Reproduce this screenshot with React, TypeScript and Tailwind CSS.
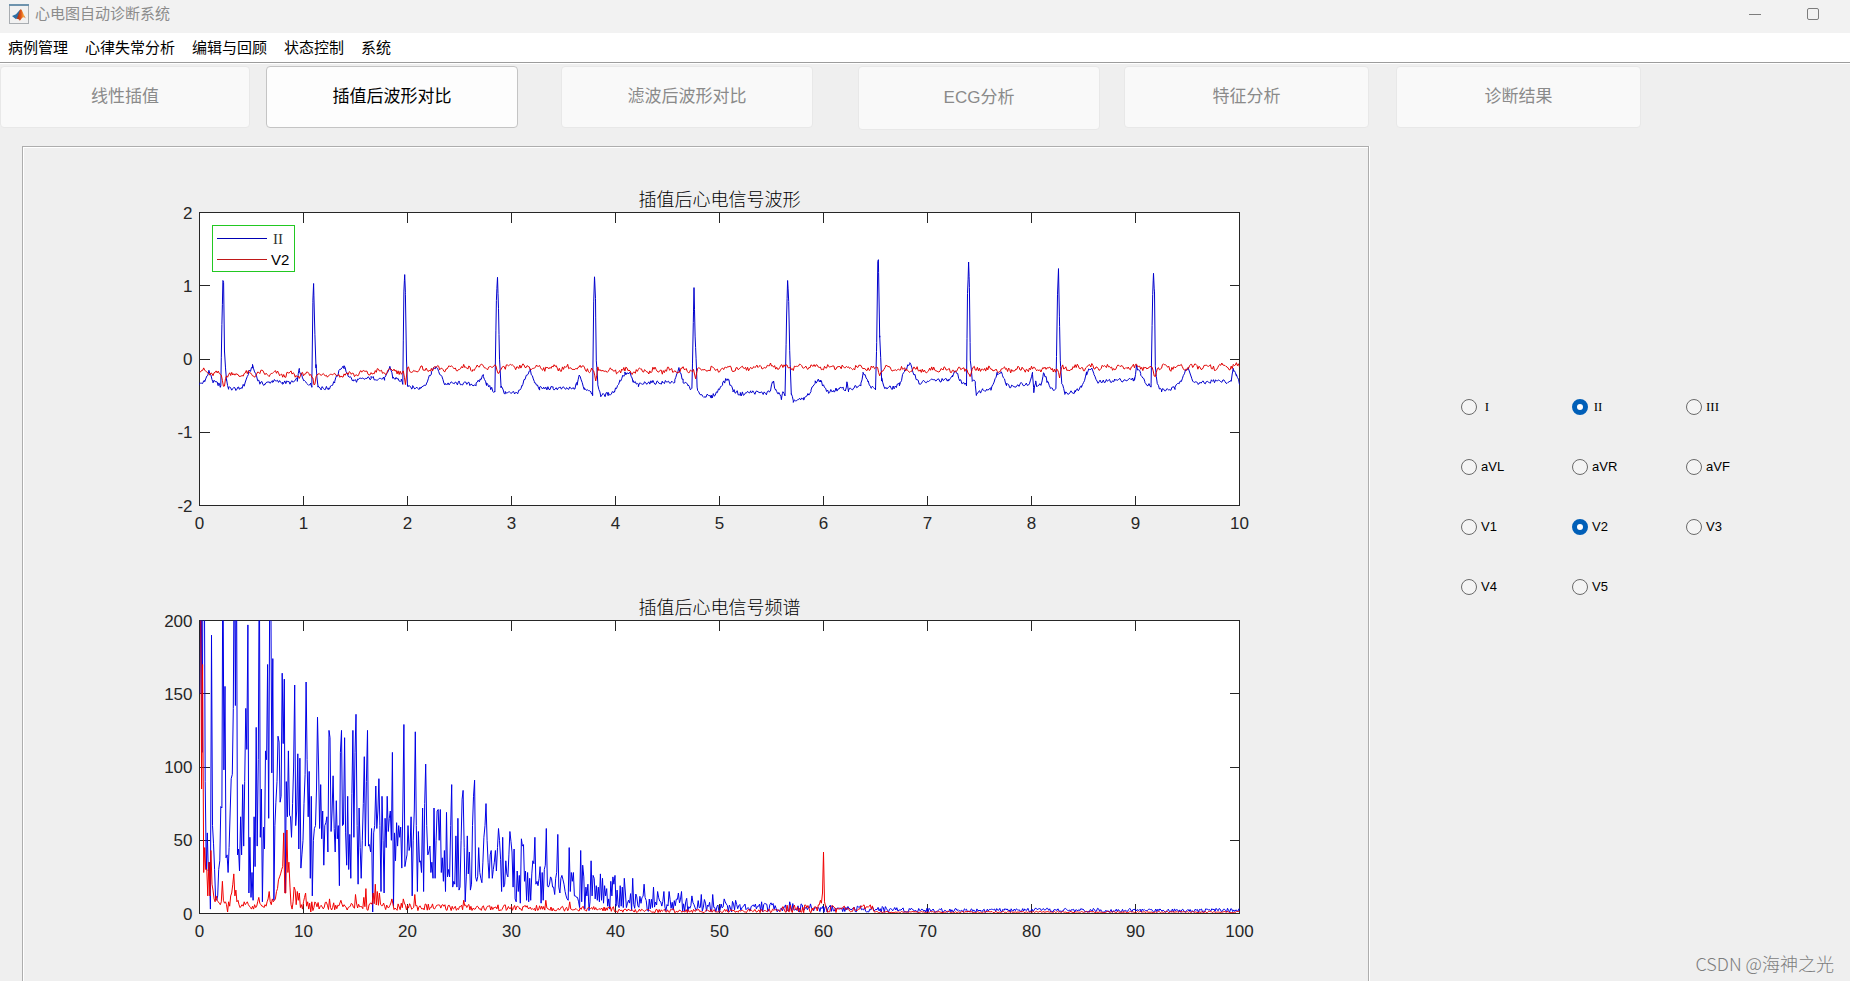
import { useState } from "react";

/* ---------- signal data ---------- */

type Point = [number, number];

// Lead II, keyed by time (s) and amplitude (mV)
const LEAD_II: number[] = [
  0, -0.34, 0.05, -0.31, 0.09, -0.16, 0.13, -0.31, 0.18, -0.34, 0.205, -0.38, 0.215, 0.45, 0.225, 1.08, 0.232, 1.05, 0.24, 0.1, 0.26, -0.3, 0.28, -0.4,
  0.38, -0.41, 0.43, -0.36, 0.47, -0.2, 0.51, -0.1, 0.55, -0.24, 0.58, -0.33, 0.63, -0.34, 0.7, -0.3, 0.8, -0.32, 0.9, -0.32,
  0.94, -0.28, 0.96, -0.15, 1.0, -0.3, 1.07, -0.35, 1.08, -0.36, 1.09, 0.8, 1.097, 1.03, 1.107, 0.5, 1.12, -0.1, 1.14, -0.37,
  1.17, -0.4, 1.24, -0.4, 1.3, -0.31, 1.36, -0.12, 1.39, -0.11, 1.43, -0.22, 1.48, -0.3, 1.55, -0.28, 1.65, -0.26, 1.78, -0.27,
  1.81, -0.2, 1.83, -0.1, 1.86, -0.25, 1.94, -0.3, 1.955, -0.36, 1.965, 0.9, 1.973, 1.17, 1.98, 0.9, 1.99, 0, 2.0, -0.35, 2.05, -0.39,
  2.12, -0.4, 2.18, -0.33, 2.23, -0.18, 2.27, -0.11, 2.31, -0.2, 2.36, -0.34, 2.5, -0.33, 2.66, -0.35, 2.7, -0.28, 2.73, -0.22,
  2.76, -0.34, 2.8, -0.4, 2.84, -0.45, 2.855, 0.8, 2.865, 1.1, 2.875, 0.7, 2.885, 0, 2.9, -0.38, 2.94, -0.47, 3.05, -0.47, 3.1, -0.38,
  3.14, -0.22, 3.18, -0.16, 3.22, -0.32, 3.27, -0.4, 3.4, -0.4, 3.6, -0.41, 3.63, -0.34, 3.65, -0.22, 3.7, -0.4, 3.76, -0.43,
  3.78, -0.48, 3.79, 0.8, 3.798, 1.11, 3.808, 0.8, 3.815, 0, 3.83, -0.35, 3.86, -0.5, 3.93, -0.48, 3.99, -0.44, 4.04, -0.3, 4.09, -0.2,
  4.14, -0.2, 4.17, -0.31, 4.22, -0.36, 4.3, -0.32, 4.45, -0.32, 4.57, -0.31, 4.61, -0.13, 4.65, -0.3, 4.7, -0.37, 4.735, -0.42,
  4.748, 0.5, 4.755, 1.0, 4.765, 0.3, 4.775, 0, 4.785, -0.4, 4.82, -0.49, 4.92, -0.52, 4.98, -0.45, 5.03, -0.33, 5.08, -0.27,
  5.13, -0.43, 5.2, -0.48, 5.3, -0.45, 5.45, -0.47, 5.49, -0.43, 5.515, -0.3, 5.54, -0.43, 5.57, -0.48, 5.595, -0.53, 5.605, -0.45, 5.63, -0.52,
  5.645, 0.6, 5.655, 1.07, 5.665, 0.8, 5.675, 0.1, 5.69, -0.5, 5.71, -0.57, 5.81, -0.55, 5.88, -0.44, 5.92, -0.31, 5.97, -0.29,
  6.03, -0.45, 6.1, -0.43, 6.19, -0.4, 6.21, -0.45, 6.225, -0.32, 6.24, -0.43, 6.3, -0.38, 6.36, -0.34, 6.38, -0.18, 6.43, -0.3,
  6.46, -0.38, 6.5, -0.42, 6.512, 0.2, 6.522, 1.36, 6.528, 1.38, 6.54, 0.3, 6.56, -0.28, 6.59, -0.4, 6.68, -0.39, 6.73, -0.35,
  6.78, -0.15, 6.83, -0.07, 6.87, -0.2, 6.92, -0.33, 7.05, -0.29, 7.2, -0.29, 7.24, -0.25, 7.27, -0.14, 7.31, -0.3, 7.375, -0.35,
  7.385, 0.9, 7.395, 1.33, 7.403, 1.0, 7.412, 0, 7.43, -0.28, 7.46, -0.33, 7.47, -0.48, 7.53, -0.42, 7.61, -0.4, 7.67, -0.2,
  7.72, -0.2, 7.76, -0.35, 7.83, -0.39, 7.9, -0.34, 7.98, -0.36, 8.01, -0.2, 8.022, -0.44, 8.04, -0.3, 8.05, -0.4, 8.1, -0.32,
  8.115, -0.18, 8.15, -0.3, 8.18, -0.38, 8.235, -0.42, 8.25, 0.9, 8.26, 1.22, 8.268, 0.6, 8.277, 0, 8.29, -0.32, 8.32, -0.46,
  8.42, -0.45, 8.48, -0.38, 8.53, -0.2, 8.57, -0.12, 8.6, -0.2, 8.63, -0.32, 8.8, -0.29, 8.99, -0.28, 9.01, -0.1, 9.05, -0.2,
  9.09, -0.32, 9.15, -0.36, 9.165, 0.9, 9.173, 1.15, 9.183, 0.9, 9.19, -0.1, 9.21, -0.35, 9.25, -0.43, 9.38, -0.4, 9.44, -0.28, 9.48, -0.15,
  9.51, -0.14, 9.54, -0.27, 9.6, -0.34, 9.75, -0.3, 9.92, -0.31, 9.94, -0.15, 9.97, -0.22, 10, -0.33,
];

// Lead V2 baseline drift
const LEAD_V2: number[] = [
  0, -0.16, 0.2, -0.22, 0.6, -0.2, 1, -0.22, 1.4, -0.21, 1.8, -0.17, 2.1, -0.15, 2.5, -0.12, 3, -0.11, 3.5, -0.12, 4, -0.16,
  4.4, -0.16, 5, -0.14, 5.5, -0.1, 6, -0.11, 6.5, -0.13, 7, -0.15, 8, -0.14, 8.7, -0.11, 9.2, -0.12, 10, -0.1,
];

// Time of each R peak and the dip that it leaves in V2
const V2_DIPS: Point[] = [
  [0.235, -0.41], [1.105, -0.38], [1.98, -0.35], [2.875, -0.22], [3.81, -0.3], [4.77, -0.27],
  [5.665, -0.12], [6.54, -0.23], [7.41, -0.24], [8.27, -0.26], [9.185, -0.27],
];

// Spectrum of lead II, one value for each 0.1 Hz
const SPECTRUM_II: number[] = [
  150, 250, 110, 250, 260, 90, 30, 55, 29, 35, 3, 190, 60, 48, 30, 10, 9, 12, 30, 36, 73, 72, 260, 98, 155, 38, 40, 28, 45, 70,
  92, 95, 140, 260, 142, 260, 40, 44, 29, 66, 40, 88, 46, 90, 140, 112, 197, 14, 52, 11, 28, 9, 66, 32, 127, 46, 105, 250, 52, 85,
  8, 59, 44, 111, 105, 170, 65, 220, 240, 96, 174, 9, 60, 76, 90, 121, 117, 76, 80, 164, 116, 160, 14, 90, 66, 111, 67, 66, 52, 75,
  100, 156, 60, 70, 109, 44, 106, 31, 40, 50, 75, 95, 158, 105, 66, 97, 24, 80, 12, 50, 58, 60, 85, 134, 100, 58, 88, 51, 70, 33,
  60, 62, 66, 42, 125, 120, 56, 70, 94, 58, 42, 77, 51, 60, 19, 110, 125, 60, 61, 120, 55, 33, 80, 30, 54, 24, 82, 125, 52, 110,
  136, 60, 20, 72, 45, 24, 50, 75, 107, 46, 90, 125, 46, 47, 42, 58, 1, 55, 60, 87, 58, 70, 92, 60, 15, 80, 50, 14, 65, 45,
  80, 56, 65, 70, 50, 110, 5, 55, 36, 62, 46, 60, 52, 59, 31, 70, 129, 32, 36, 40, 60, 43, 46, 66, 12, 50, 70, 124, 60, 15,
  56, 35, 36, 28, 72, 15, 75, 102, 60, 40, 42, 46, 28, 35, 24, 72, 24, 50, 70, 71, 50, 71, 28, 38, 22, 43, 15, 69, 25, 30, 25,
  60, 88, 18, 22, 20, 53, 18, 65, 16, 18, 50, 78, 84, 45, 8, 25, 53, 27, 42, 16, 20, 60, 80, 91, 25, 22, 25, 45, 28, 24,
  21, 35, 52, 60, 75, 50, 35, 24, 40, 43, 24, 30, 35, 43, 29, 45, 58, 50, 37, 15, 52, 18, 20, 36, 27, 25, 40, 56, 49, 42,
  18, 44, 10, 8, 29, 15, 26, 7, 51, 46, 47, 22, 29, 9, 28, 8, 24, 9, 27, 36, 34, 52, 20, 22, 19, 24, 32, 7, 28, 9,
  30, 33, 58, 19, 18, 20, 25, 24, 18, 18, 13, 24, 28, 54, 18, 14, 24, 26, 23, 20, 15, 12, 10, 9, 45, 15, 28, 22, 28, 12,
  12, 11, 11, 8, 4, 43, 8, 33, 25, 3, 18, 12, 20, 2, 8, 36, 12, 26, 24, 10, 19, 9, 18, 8, 27, 9, 24, 7, 19, 12,
  17, 5, 10, 3, 22, 12, 25, 20, 26, 5, 16, 6, 4, 19, 5, 18, 4, 24, 14, 4,
];

// Spectrum of V2, one value for each 0.1 Hz
const SPECTRUM_V2: number[] = [
  260, 250, 85, 170, 28, 45, 30, 30, 12, 35, 12, 43, 20, 16, 10, 8, 12, 9, 8, 7, 6, 8, 22, 9, 7, 8, 6, 1, 8, 5,
  12, 14, 20, 27, 12, 16, 8, 9, 6, 4, 5, 6, 5, 8, 6, 7, 8, 6, 5, 4, 3, 5, 3, 6, 4, 5, 8, 11, 7, 6,
  5, 5, 4, 6, 5, 8, 10, 15, 8, 6, 10, 8, 9, 10, 15, 17, 23, 25, 27, 30, 32, 55, 14, 14, 57, 28, 35, 18, 6, 3,
  8, 18, 16, 6, 15, 9, 14, 4, 6, 3, 8, 11, 14, 5, 8, 3, 7, 1, 8, 2, 4,
];

const V2_PEAKS: Record<number, number> = {
  125: 10, 136: 9, 150: 13, 158: 11, 160: 17, 167: 14, 169: 20, 171: 15, 173: 14, 185: 10, 196: 10, 207: 13,
  254: 9, 333: 9, 356: 8, 597: 9, 598: 7, 599: 14, 600: 42, 601: 8,
};

const II_PEAKS: Record<number, number> = {
  416: 24, 427: 20, 436: 18, 440: 15, 446: 15, 451: 15, 460: 14, 463: 15, 473: 12, 482: 13, 493: 13, 504: 10, 515: 9, 540: 8, 567: 8,
};

// Repeatable value between 0 and 1
function noise(i: number, seed: number): number {
  const s = Math.sin(i * 12.9898 + seed * 78.233) * 43758.5453;
  return s - Math.floor(s);
}

function interpolate(keys: number[], t: number): number {
  let i = 0;
  while (i < keys.length - 4 && keys[i + 2] < t) i += 2;
  const f = (t - keys[i]) / (keys[i + 2] - keys[i]);
  return keys[i + 1] + (keys[i + 3] - keys[i + 1]) * Math.min(Math.max(f, 0), 1);
}

function buildLeadII(): Point[] {
  const times: number[] = [];
  for (let i = 0; i <= 1000; i++) times.push(i / 100);
  for (let i = 0; i < LEAD_II.length; i += 2) times.push(LEAD_II[i]);
  times.sort((a, b) => a - b);
  return times.map((t, i) => [t, interpolate(LEAD_II, t) + (noise(i, 1) - 0.5) * 0.055]);
}

function buildLeadV2(): Point[] {
  const points: Point[] = [];
  for (let i = 0; i <= 1000; i++) {
    const t = i / 100;
    let v = interpolate(LEAD_V2, t) + 0.024 * Math.sin((t * 2 * Math.PI) / 0.14) + (noise(i, 2) - 0.5) * 0.06;
    for (const [at, depth] of V2_DIPS) {
      const d = Math.abs(t - at);
      if (d < 0.02) v = depth + (v - depth) * (d / 0.02);
    }
    points.push([t, v]);
  }
  return points;
}

function buildSpectrumII(): Point[] {
  const points: Point[] = [];
  for (let i = 0; i <= 1000; i++) {
    let v = SPECTRUM_II[i];
    if (v === undefined) {
      const f = i / 10;
      const top = f < 50 ? 14 - (f - 40) * 0.55 : f < 60 ? 8 - (f - 50) * 0.25 : f < 70 ? 5.5 - (f - 60) * 0.25 : 2.8;
      v = II_PEAKS[i] ?? 0.8 + noise(i, 3) * top;
    }
    points.push([i / 10 + 0.05, v]);
  }
  return points;
}

function buildSpectrumV2(): Point[] {
  const points: Point[] = [];
  for (let i = 0; i <= 1000; i++) {
    let v = V2_PEAKS[i] ?? SPECTRUM_V2[i];
    if (v === undefined) {
      const f = i / 10;
      const low = f < 40 ? 2.5 - f * 0.03 : 0.5;
      const top = f < 40 ? 7 - f * 0.09 : f < 56 ? 2.6 : f < 65 ? 5.5 : 1;
      v = low + noise(i, 4) * top;
    }
    points.push([i / 10, v]);
  }
  return points;
}

/* ---------- charts ---------- */

const PLOT_W = 1040;
const PLOT_H = 293;
const TICK = 10;

interface PlotProps {
  id: string;
  title: string;
  left: number;
  top: number;
  xMax: number;
  xStep: number;
  yMin: number;
  yMax: number;
  yStep: number;
  series: { color: string; points: Point[] }[];
}

function range(from: number, to: number, step: number): number[] {
  const out: number[] = [];
  for (let v = from; v <= to; v += step) out.push(v);
  return out;
}

function Plot({ id, title, left, top, xMax, xStep, yMin, yMax, yStep, series }: PlotProps) {
  const sx = (x: number) => left + (x / xMax) * PLOT_W;
  const sy = (y: number) => top + PLOT_H - ((y - yMin) / (yMax - yMin)) * PLOT_H;
  const xs = range(0, xMax, xStep);
  const ys = range(yMin, yMax, yStep);
  return (
    <g>
      <clipPath id={id}>
        <rect x={left} y={top} width={PLOT_W} height={PLOT_H} />
      </clipPath>
      <text
        x={left + PLOT_W / 2}
        y={top - 7}
        textAnchor="middle"
        className="fill-black font-['Noto_Sans_CJK_SC',sans-serif] text-lg font-light"
      >
        {title}
      </text>
      <rect x={left} y={top} width={PLOT_W} height={PLOT_H} fill="#fff" />
      <g stroke="#262626" fill="none" shapeRendering="crispEdges">
        {xs.map((x) => (
          <path key={x} d={`M${sx(x)} ${top}v${TICK}M${sx(x)} ${top + PLOT_H}v${-TICK}`} />
        ))}
        {ys.map((y) => (
          <path key={y} d={`M${left} ${sy(y)}h${TICK}M${left + PLOT_W} ${sy(y)}h${-TICK}`} />
        ))}
        <rect x={left} y={top} width={PLOT_W} height={PLOT_H} />
      </g>
      <g clipPath={`url(#${id})`} fill="none" strokeLinejoin="bevel">
        {series.map((s) => (
          <polyline
            key={s.color}
            stroke={s.color}
            points={s.points.map(([x, y]) => `${sx(x).toFixed(1)},${sy(y).toFixed(1)}`).join(" ")}
          />
        ))}
      </g>
      <g className="fill-[#262626] font-['Liberation_Sans',Arial,sans-serif] text-[17px]">
        {xs.map((x) => (
          <text key={x} x={sx(x)} y={top + PLOT_H + 23} textAnchor="middle">
            {x}
          </text>
        ))}
        {ys.map((y) => (
          <text key={y} x={left - 7} y={sy(y) + 6} textAnchor="end">
            {y}
          </text>
        ))}
      </g>
    </g>
  );
}

const leadII = buildLeadII();
const leadV2 = buildLeadV2();
const spectrumII = buildSpectrumII();
const spectrumV2 = buildSpectrumV2();

function Charts() {
  return (
    <svg viewBox="0 0 1345 820" className="block h-auto w-full" role="img" aria-label="插值后心电信号波形与频谱">
      <Plot
        id="wave-clip"
        title="插值后心电信号波形"
        left={176.5}
        top={65.5}
        xMax={10}
        xStep={1}
        yMin={-2}
        yMax={2}
        yStep={1}
        series={[
          { color: "#0000cc", points: leadII },
          { color: "#e00000", points: leadV2 },
        ]}
      />
      <g>
        <rect x="189.5" y="78.5" width="82" height="46" fill="#fff" stroke="#22c822" />
        <path d="M194 91.5h50" stroke="#0000b4" />
        <path d="M194 112.5h50" stroke="#c01818" />
        <text x="255" y="97" textAnchor="middle" className="fill-[#333] font-['Liberation_Serif',serif] text-[15px]">
          II
        </text>
        <text x="248" y="118" className="fill-black font-['Liberation_Sans',Arial,sans-serif] text-[15px]">
          V2
        </text>
      </g>
      <Plot
        id="spectrum-clip"
        title="插值后心电信号频谱"
        left={176.5}
        top={473.5}
        xMax={100}
        xStep={10}
        yMin={0}
        yMax={200}
        yStep={50}
        series={[
          { color: "#0000e6", points: spectrumII },
          { color: "#f00000", points: spectrumV2 },
        ]}
      />
    </svg>
  );
}

/* ---------- window chrome ---------- */

function AppIcon() {
  return (
    <svg width="20" height="20" viewBox="0 0 20 20" aria-hidden="true">
      <defs>
        <linearGradient id="peak" x1="0" y1="0" x2="1" y2="0">
          <stop offset="0" stopColor="#8c1d10" />
          <stop offset="0.5" stopColor="#e0561a" />
          <stop offset="0.75" stopColor="#f6a23c" />
          <stop offset="1" stopColor="#b3300f" />
        </linearGradient>
      </defs>
      <rect x="0.5" y="0.5" width="19" height="19" fill="#f1f1f1" stroke="#a9adb1" />
      <rect x="0" y="0" width="20" height="2" fill="#6e93ad" />
      <path d="M3 12l4-1.700 3.500-4 1.200-1-2.200 7.200-2.500 2.800z" fill="#2d6ea3" />
      <path d="M7 15c2-.5 3.200-9.800 4.800-9.800 1.500 0 2.700 6.300 5.200 9.300-1.700-1.600-2.800-1.700-4-.4-.8 1-1.400 2-2.200 2.600-1-1.400-2-2.200-3.800-1.700z" fill="url(#peak)" />
    </svg>
  );
}

const MENUS = ["病例管理", "心律失常分析", "编辑与回顾", "状态控制", "系统"];

const TABS = [
  { label: "线性插值", box: "h-[62px] w-[250px]" },
  { label: "插值后波形对比", box: "ml-4 h-[62px] w-[252px]" },
  { label: "滤波后波形对比", box: "ml-[43px] h-[62px] w-[252px]" },
  { label: "ECG分析", box: "ml-[45px] h-[64px] w-[242px]" },
  { label: "特征分析", box: "ml-6 h-[62px] w-[245px]" },
  { label: "诊断结果", box: "ml-[27px] h-[62px] w-[245px]" },
];

const LEADS = ["I", "II", "III", "aVL", "aVR", "aVF", "V1", "V2", "V3", "V4", "V5"];

export default function App() {
  const [selected, setSelected] = useState<string[]>(["II", "V2"]);
  const toggle = (lead: string) =>
    setSelected((now) => (now.includes(lead) ? now.filter((l) => l !== lead) : [...now, lead].slice(-2)));

  return (
    <div className="relative flex min-h-screen flex-col bg-[#efefef] font-['Liberation_Sans','Noto_Sans_CJK_SC',sans-serif] text-black">
      <header className="flex h-[33px] items-start justify-between bg-[#f2f2f2] pl-[9px]">
        <div className="flex items-center gap-1.5 pt-1">
          <AppIcon />
          <h1 className="text-[15px] leading-5 text-[#8c8c8c]">心电图自动诊断系统</h1>
        </div>
        <div className="flex items-center gap-[46px] pt-2 pr-[31px] text-[#7d7d7d]">
          <button type="button" aria-label="最小化" className="flex h-3 w-3 items-center">
            <span className="h-px w-full bg-current" />
          </button>
          <button type="button" aria-label="最大化" className="h-3 w-3 rounded-[2px] border border-current" />
        </div>
      </header>

      <nav className="flex h-[31px] items-start gap-[17px] border-b border-white bg-white pl-2 shadow-[inset_0_-1px_0_#9c9c9c]">
        {MENUS.map((m) => (
          <button key={m} type="button" className="pt-[5px] text-[15px] leading-5">
            {m}
          </button>
        ))}
      </nav>

      <div className="flex h-[82px] shrink-0 items-start pt-0.5">
        {TABS.map((t, i) => (
          <button
            key={t.label}
            type="button"
            disabled={i !== 1}
            className={`shrink-0 rounded border text-[17px] ${t.box} ${
              i === 1 ? "border-[#c4c4c4] bg-[#fdfdfd] text-black" : "border-[#e8e8e8] bg-[#f9f9f9] text-[#8a8a8a]"
            }`}
          >
            {t.label}
          </button>
        ))}
      </div>

      <main className="flex flex-1 pl-[22px]">
        <section className="min-w-0 flex-1 border-x border-t border-[#adadad] shadow-[1px_0_0_#fff,inset_1px_1px_0_#fff]">
          <Charts />
        </section>
        <aside className="w-[481px] shrink-0 pt-[231px] pl-[92px]">
          <fieldset aria-label="导联" className="grid auto-rows-[60px] grid-cols-[111px_114px_1fr] items-center">
            {LEADS.map((lead) => (
              <label key={lead} className="flex items-center gap-1 text-[13px] leading-4">
                <input
                  type="radio"
                  name={`lead-${lead}`}
                  checked={selected.includes(lead)}
                  onClick={() => toggle(lead)}
                  onChange={() => undefined}
                  className="h-4 w-4 appearance-none rounded-full border border-[#6a6a6a] bg-[#f4f4f4] checked:border-5 checked:border-[#005fb8] checked:bg-white"
                />
                <span className={/^I+$/.test(lead) ? "min-w-3 text-center font-['Liberation_Serif',serif]" : ""}>
                  {lead}
                </span>
              </label>
            ))}
          </fieldset>
        </aside>
      </main>

      <p className="pointer-events-none absolute right-4 bottom-1 font-['Noto_Sans_CJK_SC',sans-serif] text-lg font-light text-[#7d7d7d]">
        CSDN @海神之光
      </p>
    </div>
  );
}
